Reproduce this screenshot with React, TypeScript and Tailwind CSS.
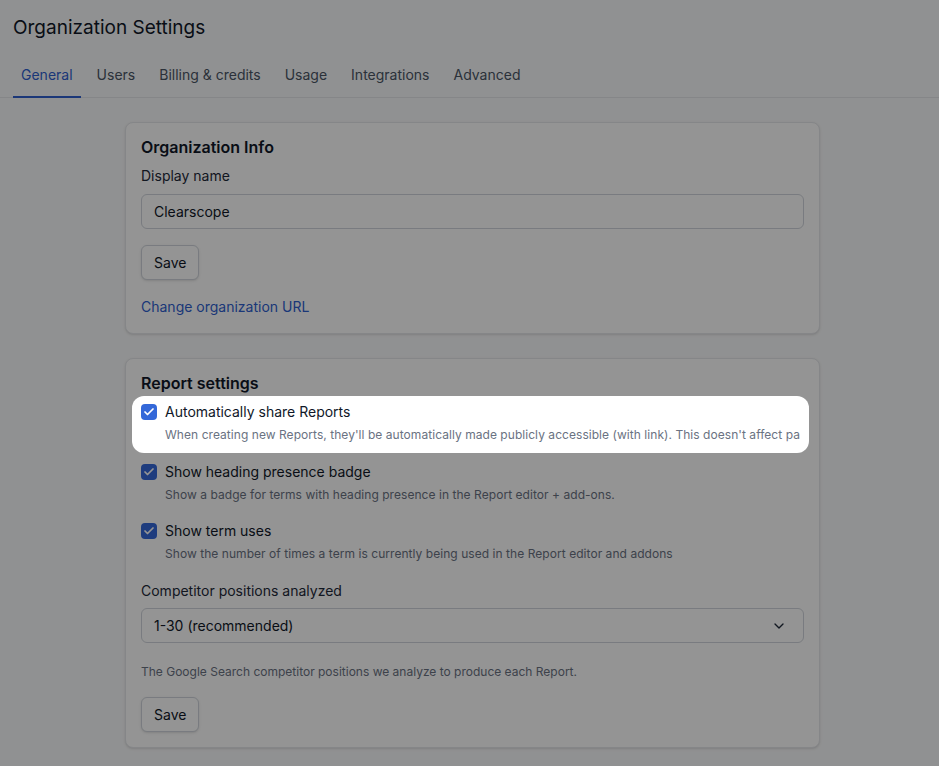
import { ChevronDown, Check } from 'lucide-react'

const tabs = ['General', 'Users', 'Billing & credits', 'Usage', 'Integrations', 'Advanced']

const options = [
  {
    label: 'Automatically share Reports',
    hint: "When creating new Reports, they'll be automatically made publicly accessible (with link). This doesn't affect pa",
    spotlight: true
  },
  {
    label: 'Show heading presence badge',
    hint: 'Show a badge for terms with heading presence in the Report editor + add-ons.'
  },
  {
    label: 'Show term uses',
    hint: 'Show the number of times a term is currently being used in the Report editor and addons'
  }
]

function SaveButton() {
  return (
    <button className="h-[35px] px-3 rounded-md border border-gray-300 bg-white text-sm text-gray-900 shadow-sm">
      Save
    </button>
  )
}

function CheckOption({ label, hint, spotlight }: { label: string; hint: string; spotlight?: boolean }) {
  return (
    <div className={spotlight ? 'relative' : ''}>
      {spotlight && (
        <div className="absolute z-10 -left-[9px] -top-[6px] -right-[5px] -bottom-[10px] rounded-xl shadow-[0_0_0_9999px_rgba(0,0,0,0.42)] pointer-events-none" />
      )}
      <div className="flex items-center gap-2 h-5">
        <span className="w-4 h-4 rounded-[4px] bg-[#3468d9] flex items-center justify-center">
          <Check className="w-3 h-3 text-white" strokeWidth={3.5} />
        </span>
        <span className="text-sm text-gray-900">{label}</span>
      </div>
      <p className="mt-[5px] pl-6 text-xs leading-4 tracking-[0.05px] text-gray-500 whitespace-nowrap">{hint}</p>
    </div>
  )
}

export default function App() {
  return (
    <div className="min-h-screen bg-[#f9fafb] text-gray-900 font-['Inter',sans-serif]">
      {/* Header */}
      <div className="px-[13px] pt-[14px]">
        <h1 className="text-[19px] leading-7 text-gray-900">Organization Settings</h1>
      </div>
      <div className="mt-[13px] border-b border-gray-200 px-[13px] flex gap-2">
        {tabs.map((t, i) => (
          <div
            key={t}
            className={
              i === 0
                ? 'px-2 pt-2.5 pb-[11px] text-sm leading-5 text-[#2f5fcf] border-b-2 border-[#2f5fcf] -mb-px'
                : 'px-2 pt-2.5 pb-[11px] text-sm leading-5 text-gray-600 border-b-2 border-transparent -mb-px'
            }
          >
            {t}
          </div>
        ))}
      </div>

      <div className="pl-[125px] pt-6 pb-6 flex flex-col gap-6">
        {/* Organization Info */}
        <div className="w-[695px] bg-white rounded-lg border border-gray-200 shadow-sm px-[15px] pt-3 pb-4">
          <h2 className="text-base leading-6 font-semibold text-gray-900">Organization Info</h2>
          <div className="mt-[7px] text-sm leading-5 text-gray-800">Display name</div>
          <div className="mt-2 h-[35px] rounded-md border border-gray-300 px-3 flex items-center text-sm text-gray-900">
            Clearscope
          </div>
          <div className="mt-4">
            <SaveButton />
          </div>
          <div className="mt-[17px] text-sm leading-5 text-[#2f5fcf]">Change organization URL</div>
        </div>

        {/* Report settings */}
        <div className="w-[695px] bg-white rounded-lg border border-gray-200 shadow-sm px-[15px] pt-3 pb-[15px]">
          <h2 className="text-base leading-6 font-semibold text-gray-900">Report settings</h2>
          <div className="mt-[7px] flex flex-col gap-[18.5px]">
            {options.map((o) => (
              <CheckOption key={o.label} {...o} />
            ))}
          </div>
          <div className="mt-[19px] text-sm leading-5 text-gray-800">Competitor positions analyzed</div>
          <div className="mt-[7px] h-[35px] rounded-md border border-gray-300 pl-3 pr-4 flex items-center justify-between text-sm text-gray-900">
            <span>1-30 (recommended)</span>
            <ChevronDown className="w-4 h-4 text-gray-800" strokeWidth={2} />
          </div>
          <p className="mt-[21px] text-xs leading-4 text-gray-500">
            The Google Search competitor positions we analyze to produce each Report.
          </p>
          <div className="mt-[17px]">
            <SaveButton />
          </div>
        </div>
      </div>
    </div>
  )
}
